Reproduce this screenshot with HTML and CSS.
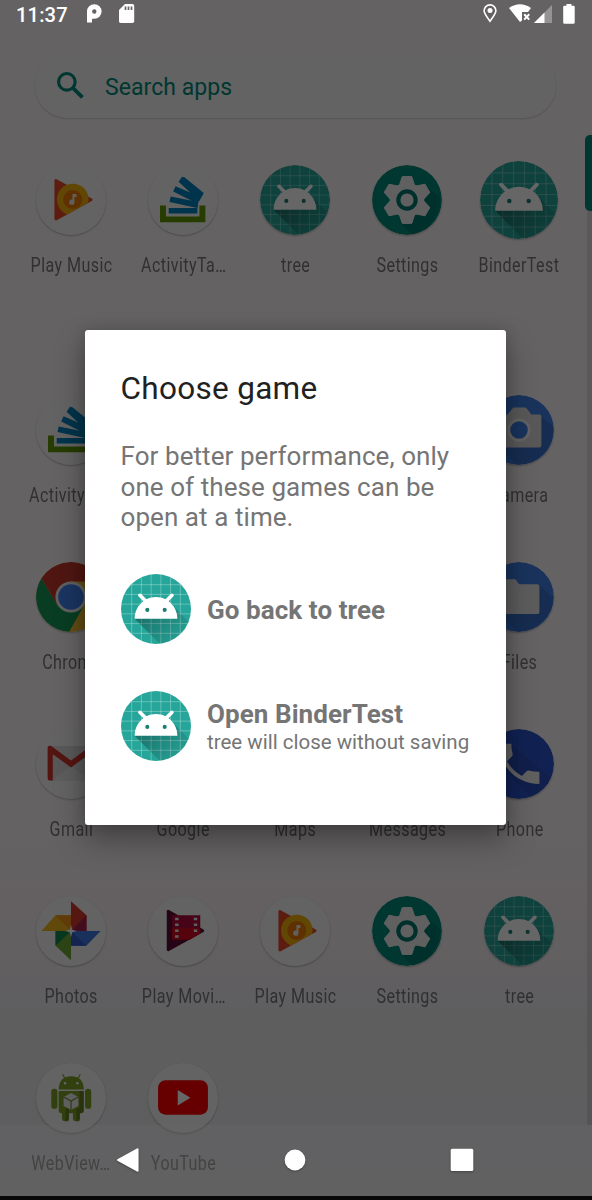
FILE: index.html
```html
<!DOCTYPE html>
<html lang="en">
<head>
<meta charset="utf-8">
<title>Choose game</title>
<link rel="stylesheet" href="styles.css">
</head>
<body>
<svg class="defs" aria-hidden="true">
  <defs>
    <linearGradient id="cast" x1="48" y1="54" x2="78" y2="84" gradientUnits="userSpaceOnUse">
      <stop offset="0" stop-color="#000" stop-opacity=".3"/><stop offset="1" stop-color="#000" stop-opacity=".05"/>
    </linearGradient>
    <clipPath id="disc"><circle cx="54" cy="54" r="36"/></clipPath>
    <clipPath id="play-edge"><path d="M0 0H71V28L57.3 36 18.7 57 0 60Z"/></clipPath>
    <symbol id="droid" viewBox="18 18 72 72">
      <g clip-path="url(#disc)">
        <path fill="#26a69a" d="M18 18h72v72H18z"/>
        <path stroke="#fff" stroke-opacity=".33" stroke-width=".9" d="M29 18v72M39 18v72M49 18v72M59 18v72M69 18v72M79 18v72M18 29h72M18 39h72M18 49h72M18 59h72M18 69h72M18 79h72"/>
        <path fill="url(#cast)" d="M32 64C32 64 38.39 52.99 44.13 50.95C51.37 48.37 70.14 49.57 70.14 49.57L108.26 87.69L108 109.01L75.97 107.97Z"/>
        <path fill="#fff" d="M66.94 46.02C72.44 50.07 76 56.61 76 64L32 64C32 56.61 35.56 50.11 40.98 46.06L36.18 41.19C35.45 40.45 35.45 39.3 36.18 38.56C36.91 37.81 38.05 37.81 38.78 38.56L44.25 44.05C47.18 42.57 50.48 41.71 54 41.71C57.48 41.71 60.78 42.57 63.68 44.05L69.11 38.56C69.84 37.81 70.98 37.81 71.71 38.56C72.44 39.3 72.44 40.45 71.71 41.19Z"/>
        <g fill="#1b7d74"><circle cx="62.94" cy="54.9" r="2.1"/><circle cx="45.06" cy="54.9" r="2.1"/></g>
      </g>
    </symbol>
    <symbol id="music" viewBox="0 0 71 71">
      <circle cx="35.5" cy="35.5" r="35.5" fill="#f7f7f7"/>
      <path fill="#e64a2a" stroke="#e64a2a" stroke-width="3" stroke-linejoin="round" d="M20.2 15.8V54.8L55.8 35.3Z"/>
      <g clip-path="url(#play-edge)"><circle cx="37.3" cy="35" r="16" fill="#f5b10a"/></g>
      <circle cx="37.3" cy="35" r="9.7" fill="#ef7a00"/>
      <path fill="#eee" d="M37 29.5h4v3h-2v5.2a2.7 2.7 0 1 1-2-2.6z"/>
    </symbol>
    <symbol id="stack" viewBox="0 0 71 71">
      <circle cx="35.5" cy="35.5" r="35.5" fill="#f7f7f7"/>
      <path fill="#5f9700" d="M12.2 41h6v11.3h34V41h6v17h-46z"/>
      <path fill="#0083bd" d="M21 43.7h29v5.6H21zM23 32l28 5.500-1 6L21.800 37.600zM28 21.500l25 11-3 6.500-24.500-12zM34.500 12l2.500.5 19.500 16-4.500 8-21-19.500z"/>
      <path fill="#0083bd" d="M56.500 28.500 51 37.500 50 44 47.500 39 50 30z"/>
    </symbol>
    <symbol id="gear" viewBox="-35.5 -35.5 71 71">
      <circle r="35.500" fill="#00897b"/>
      <path fill="#000" fill-opacity=".12" d="M20-13 33-3A35 35 0 0 1 5 35L-8 22z"/>
      <g fill="#f0f0f0">
        <circle r="17.5"/>
        <path id="tooth" stroke="#f0f0f0" stroke-linejoin="round" d="M-4.800-23.800H4.800L8-14H-8z"/>
        <use href="#tooth" transform="rotate(60)"/><use href="#tooth" transform="rotate(120)"/><use href="#tooth" transform="rotate(180)"/><use href="#tooth" transform="rotate(240)"/><use href="#tooth" transform="rotate(300)"/>
      </g>
      <circle r="8.800" fill="none" stroke="#00796b" stroke-width="4.200"/>
    </symbol>
    <symbol id="chrome" viewBox="0 0 71 71">
      <circle cx="35.5" cy="35.5" r="35.5" fill="#f2bd32"/>
      <path fill="#159a57" d="M5.500 16.500 21.500 43.500 35.500 51 49 43.500 33.500 71A35.500 35.500 0 0 1 5.500 16.500z"/>
      <path fill="#c7382c" d="M5.500 16.500A35.500 35.500 0 0 1 67.300 19.700H35.500L21.500 43.500z"/>
      <circle cx="35.500" cy="35.500" r="15.800" fill="#f1f1f1"/><circle cx="35.500" cy="35.500" r="13" fill="#4285f4"/>
    </symbol>
    <symbol id="camera" viewBox="0 0 71 71">
      <circle cx="35.5" cy="35.5" r="35.5" fill="#4080e6"/>
      <path fill="#000" fill-opacity=".12" d="M58 21 70 32A35.500 35.500 0 0 1 35 71L13 53z"/>
      <path fill="#ddd" d="M14.800 19.800H24L29.800 12.800H42.500L48 19.800H56.200a2 2 0 0 1 2 2V51.200a2 2 0 0 1-2 2H14.800a2 2 0 0 1-2-2V21.800a2 2 0 0 1 2-2z"/>
      <circle cx="35.500" cy="35.500" r="10.300" fill="#4080e6" stroke="#f4f4f4" stroke-width="2.800"/>
    </symbol>
    <symbol id="folder" viewBox="0 0 71 71">
      <circle cx="35.5" cy="35.5" r="35.5" fill="#4080e6"/>
      <path fill="#000" fill-opacity=".12" d="M56 23 70 36A35.500 35.500 0 0 1 34 71L15 52z"/>
      <path fill="#e6e6e6" d="M17 17.500H32L35.500 22.500H54.200a2 2 0 0 1 2 2V50.800a2 2 0 0 1-2 2H16.800a2 2 0 0 1-2-2V19.500a2 2 0 0 1 2.200-2z"/>
    </symbol>
    <symbol id="phone" viewBox="0 0 71 71">
      <circle cx="35.5" cy="35.5" r="35.5" fill="#2c56cc"/>
      <path fill="#000" fill-opacity=".08" d="M27 15 68 50A35.500 35.500 0 0 1 48 69L20 42z"/>
      <path fill="#efefef" transform="translate(8.300 8) scale(2.280)" d="M6.620 10.790c1.440 2.830 3.760 5.140 6.590 6.590l2.200-2.200q.3-.3.800-.250Q18.400 15.500 21 15.500V21C11 21 3 13 3 3H8.500Q8.500 5.500 9.070 7.570q.1.650-.25 1.020z"/>
    </symbol>
    <symbol id="gmail" viewBox="0 0 71 71">
      <circle cx="35.5" cy="35.5" r="35.5" fill="#f7f7f7"/>
      <path fill="#dcdcdc" d="M12 17.200H59V52.200H12z"/><path fill="#e8e8e8" d="M17 52 35.500 38 54 52z"/>
      <path fill="#d2362b" d="M11.800 19c0-2 2.500-2.500 4-1.500L35.500 32 55.200 17.500c1.500-1 4-.5 4 1.500V52.200H54V25.500L35.500 39 17 25.500V52.200H14a2.200 2.200 0 0 1-2.200-2.200z"/>
    </symbol>
    <symbol id="photos" viewBox="0 0 71 71">
      <circle cx="35.5" cy="35.5" r="35.5" fill="#f7f7f7"/>
      <path fill="#d8392c" d="M35.500 5.200 51.200 19.500V35.500H35.500z"/><path fill="#a5214f" d="M51.200 19.500V35.500H35.500z"/>
      <path fill="#3f78e4" d="M35.500 35.500H65.500L51 50.500H35.500z"/><path fill="#2e5bc6" d="M35.500 35.500 51 50.500H35.500z"/>
      <path fill="#6ca835" d="M35.500 35.500V65.200L19.800 50.500V35.500z"/><path fill="#128a53" d="M35.500 35.500H19.800V50.500z"/>
      <path fill="#f2b51d" d="M35.500 35.500H5.500L19.800 19.500H35.500z"/><path fill="#ef9517" d="M19.800 19.500H35.500V35.500z"/>
      <path fill="#fff" d="M35.500 29.500 36.800 34.200 41.500 35.500 36.800 36.800 35.500 41.500 34.200 36.800 29.500 35.500 34.200 34.200z"/>
    </symbol>
    <symbol id="movies" viewBox="0 0 71 71">
      <circle cx="35.5" cy="35.5" r="35.5" fill="#f7f7f7"/>
      <path fill="#5e0c38" stroke="#5e0c38" stroke-width="3" stroke-linejoin="round" d="M20.500 15.500V54.500L55.500 35.300z"/>
      <path fill="#b10b3c" d="M24.500 19.500H53V33H24.500z"/><path fill="#d50a25" d="M24.500 32.500H53V38L42.500 44.500H24.500z"/>
      <path fill="#eee" d="M27.500 22h3.500v2.500h-3.500zM27.500 28h3.500v2.500h-3.500zM27.500 34h3.500v2.500h-3.500zM27.500 39.800h3.500v2.500h-3.500zM46.500 22h3.500v2.500h-3.500zM46.500 28h3.500v2.500h-3.500zM46.500 34h3.500v2.500h-3.500z"/>
    </symbol>
    <symbol id="webview" viewBox="0 0 71 71">
      <circle cx="35.5" cy="35.5" r="35.5" fill="#f7f7f7"/>
      <path stroke="#7b9c25" stroke-width="1.200" d="M27 11.500 30 17M45 11.500 42 17"/>
      <g fill="#7d9f26">
        <path d="M23 27C23 18 28 13.500 35.700 13.500S48.500 18 48.500 27z"/>
        <path d="M23 28.500H48.500V48a3 3 0 0 1-3 3H26a3 3 0 0 1-3-3z"/>
        <rect x="15.500" y="26" width="6.200" height="20.500" rx="3"/><rect x="49.800" y="26" width="6.200" height="20.500" rx="3"/>
        <rect x="26.400" y="46" width="7" height="13" rx="2.500"/><rect x="37.500" y="46" width="7" height="13" rx="2.500"/>
      </g>
      <path fill="#000" fill-opacity=".2" d="M44 28.500H48.500V48a3 3 0 0 1-3 3H44zM30 46h3.500v13H30zM41 46h3.500v13H41z"/>
      <circle cx="29.500" cy="20.500" r="1.200" fill="#fff"/><circle cx="42" cy="20.500" r="1.200" fill="#fff"/>
      <path fill="#eee" d="M35.500 30.500 43 34.500V43.500L35.500 47.500 28 43.500V34.500z"/><path fill="none" stroke="#738f30" stroke-width="1.200" d="M28 34.500 35.500 38.500 43 34.500M35.500 38.500V47.500"/>
    </symbol>
    <symbol id="youtube" viewBox="0 0 71 71">
      <circle cx="35.5" cy="35.5" r="35.5" fill="#f7f7f7"/>
      <rect x="10.200" y="17.500" width="50.600" height="35" rx="7.500" fill="#ff0000"/><path fill="#fff" d="M30.200 27.500V43L43 35.200z"/>
    </symbol>
  </defs>
</svg>

<div class="screen">
  <main class="drawer">
    <div class="search">
      <svg class="search-icon" viewBox="0 0 26 26"><circle cx="9.500" cy="9.500" r="8" fill="none" stroke="#00897b" stroke-width="3"/><path stroke="#00897b" stroke-width="3.600" d="M15 15 24.500 24.500"/></svg>
      <span>Search apps</span>
    </div>
    <div class="apps predicted">
      <div class="app"><svg><use href="#music"/></svg><span>Play Music</span></div>
      <div class="app"><svg><use href="#stack"/></svg><span>ActivityTa…</span></div>
      <div class="app"><svg><use href="#droid"/></svg><span>tree</span></div>
      <div class="app"><svg><use href="#gear"/></svg><span>Settings</span></div>
      <div class="app pressed"><svg><use href="#droid"/></svg><span>BinderTest</span></div>
    </div>
    <div class="apps">
      <div class="app"><svg><use href="#stack"/></svg><span>ActivityTa…</span></div>
      <div></div><div></div><div></div>
      <div class="app"><svg><use href="#camera"/></svg><span>Camera</span></div>
      <div class="app"><svg><use href="#chrome"/></svg><span>Chrome</span></div>
      <div></div><div></div><div></div>
      <div class="app"><svg><use href="#folder"/></svg><span>Files</span></div>
      <div class="app"><svg><use href="#gmail"/></svg><span>Gmail</span></div>
      <div class="app bare"><span>Google</span></div>
      <div class="app bare"><span>Maps</span></div>
      <div class="app bare"><span>Messages</span></div>
      <div class="app"><svg><use href="#phone"/></svg><span>Phone</span></div>
      <div class="app"><svg><use href="#photos"/></svg><span>Photos</span></div>
      <div class="app"><svg><use href="#movies"/></svg><span>Play Movi…</span></div>
      <div class="app"><svg><use href="#music"/></svg><span>Play Music</span></div>
      <div class="app"><svg><use href="#gear"/></svg><span>Settings</span></div>
      <div class="app"><svg><use href="#droid"/></svg><span>tree</span></div>
      <div class="app"><svg><use href="#webview"/></svg><span>WebView…</span></div>
      <div class="app"><svg><use href="#youtube"/></svg><span>YouTube</span></div>
    </div>
    <div class="scroll-track"></div>
    <div class="scroll-thumb"></div>
    <div class="nav-tint"></div>
  </main>

  <div class="scrim"></div>

  <header class="status">
    <span class="clock">11:37</span>
    <svg class="s-p" width="15" height="19" viewBox="0 0 15 19"><path fill="#fff" fill-rule="evenodd" d="M0 18.500V7.500a7.300 7.300 0 1 1 7.300 7.300H5V18.500zM7.300 5.300a2.200 2.200 0 1 0 0 4.400 2.200 2.200 0 0 0 0-4.400z"/></svg>
    <svg class="s-sd" width="16" height="19" viewBox="0 0 16 19"><path fill="#fff" d="M6 0H13.500A1.700 1.700 0 0 1 15.200 1.700V17.300A1.700 1.700 0 0 1 13.500 19H1.700A1.700 1.700 0 0 1 0 17.300V6z"/><path stroke="#666364" stroke-width="1.700" d="M6.500 2.500V6M9.500 2.500V6M12.500 2.500V6"/></svg>
    <span class="gap"></span>
    <svg width="14" height="19" viewBox="0 0 14 19"><path fill="none" stroke="#fff" stroke-width="1.600" d="M7 17.200C3 12 1.100 9.500 1.100 6.800a5.900 5.900 0 0 1 11.800 0C12.900 9.500 11 12 7 17.200z"/><circle cx="7" cy="6.600" r="2.500" fill="#fff"/></svg>
    <svg class="s-wifi" width="22" height="19" viewBox="0 0 22 19"><path fill="#fff" d="M0 4Q11-3.500 22 4L19 8H13V16.500L11 18z"/><path stroke="#fff" stroke-width="2" d="M15.200 10.200 20.200 15.600M20.200 10.200 15.200 15.600"/></svg>
    <svg class="s-signal" width="18" height="18" viewBox="0 0 18 18"><path fill="#959495" d="M18 0V18H0z"/><path fill="#fff" d="M10.500 7.500V18H0z"/></svg>
    <svg class="s-battery" width="12" height="20" viewBox="0 0 12 20"><path fill="#fff" d="M3.500 0H8.500V1.800H10.500A1.200 1.200 0 0 1 11.700 3V18.500A1.200 1.200 0 0 1 10.500 19.700H1.400A1.200 1.200 0 0 1 .2 18.500V3A1.200 1.200 0 0 1 1.400 1.800H3.500z"/></svg>
  </header>

  <section class="dialog" role="dialog">
    <h1>Choose game</h1>
    <p>For better performance, only<br>one of these games can be<br>open at a time.</p>
    <div class="option">
      <svg><use href="#droid"/></svg>
      <div><strong>Go back to tree</strong></div>
    </div>
    <div class="option">
      <svg><use href="#droid"/></svg>
      <div><strong>Open BinderTest</strong><small>tree will close without saving</small></div>
    </div>
  </section>

  <nav class="nav">
    <svg width="24" height="26" viewBox="0 0 24 26"><path fill="#fff" stroke="#fff" stroke-width="1.500" stroke-linejoin="round" d="M21.800 2V24L1.800 13z"/></svg>
    <svg width="22" height="22" viewBox="0 0 22 22"><circle cx="11" cy="11" r="10.400" fill="#fff"/></svg>
    <svg width="24" height="24" viewBox="0 0 24 24"><rect x=".7" y=".7" width="22.600" height="22.300" rx="1.500" fill="#fff"/></svg>
  </nav>
</div>
</body>
</html>
```
FILE: styles.css
```css
* { box-sizing: border-box; }
body { margin: 0; font-family: Roboto, "Liberation Sans", sans-serif; background: #161618; }
.defs { position: absolute; width: 0; height: 0; }
.screen { position: relative; height: 1200px; overflow: hidden; }

.drawer {
  position: relative;
  height: 1196px;
  padding: 53px 17px 0 15px;
  overflow: hidden;
  background: linear-gradient(#fdf6f8 0, #fdf6f8 65%, #f8f0f3 78%, #ebeaee 85%, #ecebef 100%);
}
.search {
  display: flex;
  align-items: center;
  gap: 21px;
  width: 521px;
  height: 65px;
  margin-left: 20px;
  padding-left: 22px;
  border-radius: 33px;
  background: #f7f8f7;
  box-shadow: 0 1px 2px rgba(0, 0, 0, .18);
  color: #00897b;
  font-size: 23px;
  letter-spacing: .05px;
}
.search-icon { width: 27px; height: 27px; }
.search span { padding-top: 3px; }
.apps {
  display: grid;
  grid-template-columns: repeat(5, 112px);
  grid-auto-rows: 167px;
}
.predicted { padding-top: 46.5px; height: 276.5px; }
.app { display: flex; flex-direction: column; align-items: center; }
.app svg {
  width: 70px;
  height: 70px;
  margin-bottom: 1px;
  flex: none;
  border-radius: 50%;
  box-shadow: 0 1px 2px rgba(0, 0, 0, .28);
}
.app span {
  margin-top: 18.5px;
  padding-left: 1px;
  line-height: 24px;
  font-size: 19.5px;
  letter-spacing: .5px;
  white-space: nowrap;
  color: #7a7879;
  transform: scaleX(.825);
}
.app.bare { padding-top: 71px; }
.pressed svg { width: 78px; height: 78px; margin: -4px 0 -3px; }
.scroll-track { position: absolute; right: 0; top: 205px; width: 5px; height: 920px; background: rgba(0, 0, 0, .1); }
.scroll-thumb { position: absolute; right: 0; top: 135px; width: 7px; height: 76px; border-radius: 5px 0 0 5px; background: #00897b; }
.nav-tint { position: absolute; left: 0; right: 0; bottom: 0; height: 71px; background: rgba(255, 255, 255, .35); }
.scrim { position: absolute; inset: 0; background: rgba(0, 0, 0, .6); }

.status {
  position: absolute;
  inset: 0 0 auto 0;
  display: flex;
  align-items: flex-start;
  height: 27px;
  padding: 3.5px 17px 0 16px;
  color: #fff;
}
.clock { width: 71px; font-size: 20.2px; line-height: 22px; font-weight: 500; letter-spacing: .1px; }
.s-sd { margin-left: 17px; }
.gap { flex: 1; }
.s-wifi { margin-left: 12px; }
.s-signal { margin: 1px 0 0 3px; }
.s-battery { margin-left: 11px; }

.dialog {
  position: absolute;
  left: 85px;
  top: 330px;
  width: 420.5px;
  height: 495px;
  padding: 40px 35.5px;
  border-radius: 3px;
  background: #fff;
  box-shadow: 0 14px 30px rgba(0, 0, 0, .34), 0 0 14px rgba(0, 0, 0, .14);
  color: #757575;
}
.dialog h1 { margin: 0; font-size: 31.5px; line-height: 38px; font-weight: 400; letter-spacing: .3px; color: #212121; }
.dialog p { margin: 33px 0 41px; font-size: 26px; line-height: 30.5px; letter-spacing: .07px; white-space: nowrap; }
.option { display: flex; align-items: center; gap: 16.5px; height: 70px; margin-bottom: 47px; }
.option svg { width: 70px; height: 70px; flex: none; }
.option div { padding-top: 3px; }
.option strong { display: block; font-size: 26px; line-height: 30px; font-weight: 700; letter-spacing: .07px; white-space: nowrap; }
.option small { display: block; font-size: 20.5px; line-height: 26px; white-space: nowrap; }

.nav {
  position: absolute;
  left: 0;
  right: 0;
  top: 1124px;
  height: 71px;
  display: flex;
  align-items: center;
  justify-content: space-between;
  padding: 0 118.5px 0 116px;
}
.nav svg { filter: drop-shadow(0 1px 1px rgba(0, 0, 0, .3)); }
```
